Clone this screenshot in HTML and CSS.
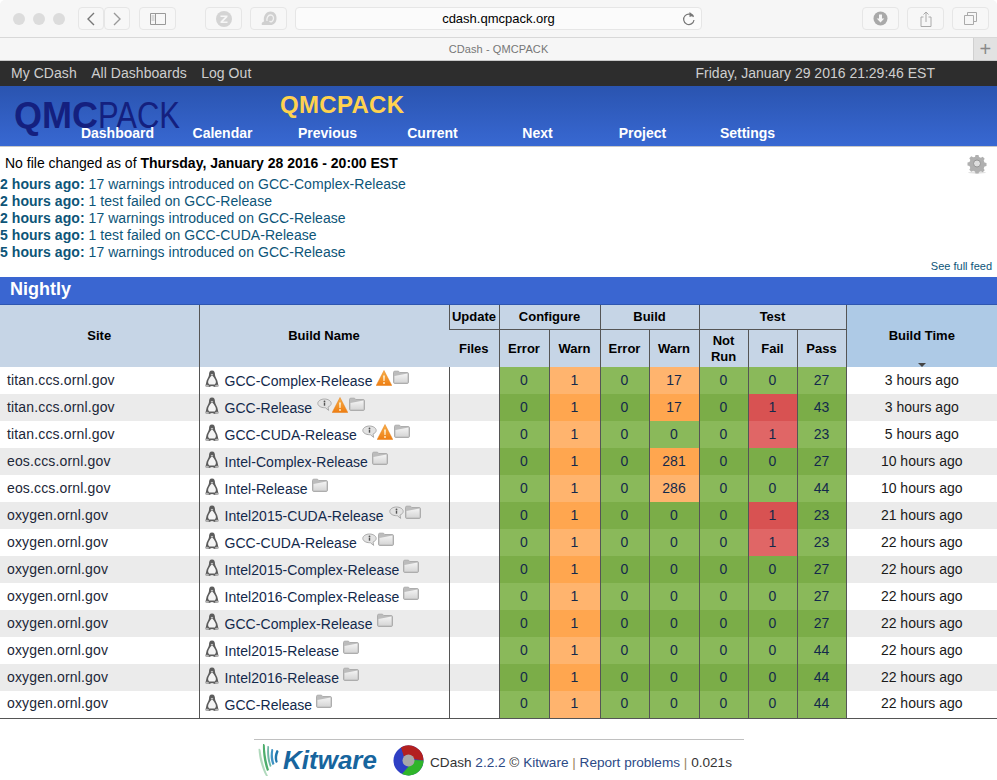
FILE: index.html
```html
<!DOCTYPE html>
<html lang="en">
<head>
  <meta charset="UTF-8">
  <title>CDash - QMCPACK</title>
  <link rel="stylesheet" href="styles.css">
</head>
<body>
  <svg class="defs" width="0" height="0">
    <defs>
      <linearGradient id="warn-fill" x1="0" y1="0" x2="0" y2="1">
        <stop offset="0" stop-color="#f7b04a"/>
        <stop offset="1" stop-color="#ee7d12"/>
      </linearGradient>
      <linearGradient id="folder-fill" x1="0" y1="0" x2="0" y2="1">
        <stop offset="0" stop-color="#f4f4f4"/>
        <stop offset="1" stop-color="#d6d6d6"/>
      </linearGradient>
    </defs>
    <symbol id="tux" viewBox="0 0 14 18">
      <path d="M7 .5C4.600.5 4 2.600 4 5c0 2-2.600 4.600-2.900 8-.1 1.200-.6 2-.6 2.500 0 1 3 1.500 3.500 1.500 1 0 1.800-1 3-1s2 1 3 1c.5 0 3.500-.5 3.500-1.500 0-.5-.5-1.300-.6-2.500C12.600 9.600 10 7 10 5c0-2.400-.6-4.500-3-4.500z" fill="#5c5c5c"/>
      <path d="M7 5.500C5.600 6 4.800 8 3.600 10c-.8 1.500-.6 3.500.6 4.500h5.600c1.200-1 1.400-3 .6-4.500C9.200 8 8.400 6 7 5.500z" fill="#f4f4f4"/>
      <path d="M5.600 4.600L7 3.800l1.400.8L7 5.700z" fill="#c9c9c9"/>
      <path d="M0 16c1-1.600 3-1.600 4-.6l-.4 1.500C2.500 17 .8 16.800 0 16zm14 0c-1-1.600-3-1.600-4-.6l.4 1.500c1.100.1 2.800-.1 3.600-.9z" fill="#b5b5b5"/>
    </symbol>
    <symbol id="folder" viewBox="0 0 16 14">
      <path d="M.5 2.500C.5 1.700 1 1.200 1.800 1.200h3.700l1.200 1.300h7.500c.7 0 1.300.5 1.300 1.200v8.500c0 .7-.5 1.300-1.300 1.300H1.800c-.7 0-1.300-.5-1.300-1.300z" fill="#bcbcbc" stroke="#adadad"/>
      <path d="M1.500 6L14.500 3.500v9H1.500z" fill="url(#folder-fill)"/>
    </symbol>
    <symbol id="warn" viewBox="0 0 16 16">
      <path d="M8 .5L15.800 15.500H.2z" fill="url(#warn-fill)" stroke="#e67f16" stroke-width=".5"/>
      <path d="M7 5.500h2l-.4 5.500H7.400z" fill="#ffe9c4"/>
      <circle cx="8" cy="13" r="1" fill="#ffe9c4"/>
    </symbol>
    <symbol id="note" viewBox="0 0 15 13">
      <path d="M7.500 1C3.900 1 .8 3 .8 5.400c0 2.400 3.100 4.300 6.700 4.300h.8l3.400 2.700-.7-3.300c1.800-.8 3.200-2.100 3.200-3.700C14.200 3 11.100 1 7.500 1z" fill="#e2e2e2" stroke="#ababab"/>
      <circle cx="7.500" cy="3.400" r=".9" fill="#555"/>
      <path d="M6.800 4.700h1.400v3H6.800z" fill="#555"/>
    </symbol>
  </svg>

  <div class="toolbar">
    <div class="lights"><i></i><i></i><i></i></div>
    <div class="nav-pair">
      <div class="tool tool-nav"><svg width="10" height="16" viewBox="0 0 10 16"><path d="M8 2L2 8l6 6" fill="none" stroke="#777" stroke-width="1.400"/></svg></div>
      <div class="tool tool-nav"><svg width="10" height="16" viewBox="0 0 10 16"><path d="M2 2l6 6-6 6" fill="none" stroke="#999" stroke-width="1.400"/></svg></div>
    </div>
    <div class="tool tool-side"><svg width="16" height="12" viewBox="0 0 16 12"><path d="M.5.500h15v11H.500zM5.500.500v11" fill="none" stroke="#999"/><path d="M1.500 3h3M1.500 5h3M1.500 7h3" stroke="#bbb"/></svg></div>
    <div class="tool tool-ext"><svg width="18" height="18" viewBox="0 0 18 18"><circle cx="9" cy="9" r="8" fill="#d4d4d4"/><path d="M5.500 5.500h7v1.500L8 11.500h4.500V13h-7v-1.500L10 7H5.500z" fill="#f6f6f6"/></svg></div>
    <div class="tool tool-ext"><svg width="18" height="18" viewBox="0 0 18 18"><path d="M2 15c-1-1.500 0-3 2-3.500C3 6 6 1.500 10.500 1.500 14.500 1.500 17 5 16.500 9c-.4 3.500-2.500 6-6 6z" fill="#d0d0d0"/><path d="M7 11c-.5-3 1-6 3.500-6s3.500 2.500 2.800 4.500S11 12.500 9.500 11" fill="none" stroke="#f1f1f1" stroke-width="1.300"/></svg></div>
    <div class="urlbar">
      <span class="url">cdash.qmcpack.org</span>
      <svg class="reload" width="14" height="14" viewBox="0 0 14 14"><path d="M11.500 5A5.200 5.200 0 1 0 12 8" fill="none" stroke="#777" stroke-width="1.200"/><path d="M7.500 0v5l4.500-1.500z" fill="#777"/></svg>
    </div>
    <div class="tool tool-right"><svg width="15" height="15" viewBox="0 0 15 15"><circle cx="7.500" cy="7.500" r="7" fill="#a9a9a9"/><path d="M6 3.500h3v4h2.300l-3.800 4-3.800-4H6z" fill="#f6f6f6"/></svg></div>
    <div class="tool tool-right"><svg width="12" height="16" viewBox="0 0 12 16"><path d="M3.500 6H1v9.500h10V6H8.500" fill="none" stroke="#aaa"/><path d="M6 11V1M3.500 3.500L6 1l2.500 2.500" fill="none" stroke="#aaa"/></svg></div>
    <div class="tool tool-right"><svg width="13" height="13" viewBox="0 0 13 13"><path d="M.5 3.500h9v9h-9z" fill="#f6f6f6" stroke="#aaa"/><path d="M3.500 3.500v-3h9v9h-3" fill="none" stroke="#aaa"/></svg></div>
  </div>

  <div class="tabbar">
    <span class="tab-title">CDash - QMCPACK</span>
    <span class="tab-add">+</span>
  </div>

  <div class="topbar">
    <div class="topbar-links">
      <a href="#">My CDash</a>
      <a href="#">All Dashboards</a>
      <a href="#">Log Out</a>
    </div>
    <div class="topbar-date">Friday, January 29 2016 21:29:46 EST</div>
  </div>

  <div class="header">
    <div class="logo"><b>QMC</b><span>PACK</span></div>
    <div class="project-name">QMCPACK</div>
    <nav class="menu">
      <a href="#">Dashboard</a>
      <a href="#">Calendar</a>
      <a href="#">Previous</a>
      <a href="#">Current</a>
      <a href="#">Next</a>
      <a href="#">Project</a>
      <a href="#">Settings</a>
    </nav>
  </div>

  <div class="feed">
    <svg class="gear" width="20" height="20" viewBox="0 0 20 20">
      <ellipse cx="10" cy="18.500" rx="9" ry="1.200" fill="#e2e2e2"/>
      <path d="M8.500 1h3l.5 2 1.900.8 1.800-1 2 2-1 1.800.8 1.900 2 .5v3l-2 .5-.8 1.900 1 1.800-2 2-1.800-1-1.900.8-.5 1.500h-3L8 17.500l-1.900-.8-1.800 1-2-2 1-1.800-.8-1.900-2-.5v-3l2-.5.8-1.900-1-1.800 2-2 1.800 1L8 3z" fill="#b0b0b0"/>
      <circle cx="10" cy="9.500" r="3.500" fill="#dedede" stroke="#969696"/>
    </svg>
    <div class="feed-title">No file changed as of <b>Thursday, January 28 2016 - 20:00 EST</b></div>
    <div class="feed-line"><b>2 hours ago:</b> 17 warnings introduced on GCC-Complex-Release</div>
    <div class="feed-line"><b>2 hours ago:</b> 1 test failed on GCC-Release</div>
    <div class="feed-line"><b>2 hours ago:</b> 17 warnings introduced on GCC-Release</div>
    <div class="feed-line"><b>5 hours ago:</b> 1 test failed on GCC-CUDA-Release</div>
    <div class="feed-line"><b>5 hours ago:</b> 17 warnings introduced on GCC-Release</div>
    <div class="feed-more"><a href="#">See full feed</a></div>
  </div>

  <div class="group-title">Nightly</div>

  <table class="builds">
    <colgroup>
      <col class="c-site"><col class="c-build"><col class="c-50">
      <col class="c-50"><col class="c-51"><col class="c-49"><col class="c-50">
      <col class="c-49"><col class="c-49"><col class="c-49"><col class="c-time">
    </colgroup>
    <thead>
      <tr class="head-top">
        <th rowspan="2">Site</th>
        <th rowspan="2">Build Name</th>
        <th>Update</th>
        <th colspan="2">Configure</th>
        <th colspan="2">Build</th>
        <th colspan="3">Test</th>
        <th rowspan="2" class="sorted">Build Time<span class="sort-arrow"></span></th>
      </tr>
      <tr class="head-sub">
        <th>Files</th>
        <th>Error</th><th>Warn</th>
        <th>Error</th><th>Warn</th>
        <th>Not Run</th><th>Fail</th><th>Pass</th>
      </tr>
    </thead>
    <tbody>
      <tr>
        <td class="site">titan.ccs.ornl.gov</td>
        <td class="name"><svg class="tux"><use href="#tux"/></svg><a href="#">GCC-Complex-Release</a><svg class="ic-warn first"><use href="#warn"/></svg><svg class="ic-folder"><use href="#folder"/></svg></td>
        <td></td><td class="ok">0</td><td class="warn">1</td><td class="ok">0</td><td class="warn">17</td><td class="ok">0</td><td class="ok">0</td><td class="ok">27</td><td class="time">3 hours ago</td>
      </tr>
      <tr>
        <td class="site">titan.ccs.ornl.gov</td>
        <td class="name"><svg class="tux"><use href="#tux"/></svg><a href="#">GCC-Release</a><svg class="ic-note"><use href="#note"/></svg><svg class="ic-warn"><use href="#warn"/></svg><svg class="ic-folder"><use href="#folder"/></svg></td>
        <td></td><td class="ok">0</td><td class="warn">1</td><td class="ok">0</td><td class="warn">17</td><td class="ok">0</td><td class="bad">1</td><td class="ok">43</td><td class="time">3 hours ago</td>
      </tr>
      <tr>
        <td class="site">titan.ccs.ornl.gov</td>
        <td class="name"><svg class="tux"><use href="#tux"/></svg><a href="#">GCC-CUDA-Release</a><svg class="ic-note"><use href="#note"/></svg><svg class="ic-warn"><use href="#warn"/></svg><svg class="ic-folder"><use href="#folder"/></svg></td>
        <td></td><td class="ok">0</td><td class="warn">1</td><td class="ok">0</td><td class="ok">0</td><td class="ok">0</td><td class="bad">1</td><td class="ok">23</td><td class="time">5 hours ago</td>
      </tr>
      <tr>
        <td class="site">eos.ccs.ornl.gov</td>
        <td class="name"><svg class="tux"><use href="#tux"/></svg><a href="#">Intel-Complex-Release</a><svg class="ic-folder first"><use href="#folder"/></svg></td>
        <td></td><td class="ok">0</td><td class="warn">1</td><td class="ok">0</td><td class="warn">281</td><td class="ok">0</td><td class="ok">0</td><td class="ok">27</td><td class="time">10 hours ago</td>
      </tr>
      <tr>
        <td class="site">eos.ccs.ornl.gov</td>
        <td class="name"><svg class="tux"><use href="#tux"/></svg><a href="#">Intel-Release</a><svg class="ic-folder first"><use href="#folder"/></svg></td>
        <td></td><td class="ok">0</td><td class="warn">1</td><td class="ok">0</td><td class="warn">286</td><td class="ok">0</td><td class="ok">0</td><td class="ok">44</td><td class="time">10 hours ago</td>
      </tr>
      <tr>
        <td class="site">oxygen.ornl.gov</td>
        <td class="name"><svg class="tux"><use href="#tux"/></svg><a href="#">Intel2015-CUDA-Release</a><svg class="ic-note"><use href="#note"/></svg><svg class="ic-folder"><use href="#folder"/></svg></td>
        <td></td><td class="ok">0</td><td class="warn">1</td><td class="ok">0</td><td class="ok">0</td><td class="ok">0</td><td class="bad">1</td><td class="ok">23</td><td class="time">21 hours ago</td>
      </tr>
      <tr>
        <td class="site">oxygen.ornl.gov</td>
        <td class="name"><svg class="tux"><use href="#tux"/></svg><a href="#">GCC-CUDA-Release</a><svg class="ic-note"><use href="#note"/></svg><svg class="ic-folder"><use href="#folder"/></svg></td>
        <td></td><td class="ok">0</td><td class="warn">1</td><td class="ok">0</td><td class="ok">0</td><td class="ok">0</td><td class="bad">1</td><td class="ok">23</td><td class="time">22 hours ago</td>
      </tr>
      <tr>
        <td class="site">oxygen.ornl.gov</td>
        <td class="name"><svg class="tux"><use href="#tux"/></svg><a href="#">Intel2015-Complex-Release</a><svg class="ic-folder first"><use href="#folder"/></svg></td>
        <td></td><td class="ok">0</td><td class="warn">1</td><td class="ok">0</td><td class="ok">0</td><td class="ok">0</td><td class="ok">0</td><td class="ok">27</td><td class="time">22 hours ago</td>
      </tr>
      <tr>
        <td class="site">oxygen.ornl.gov</td>
        <td class="name"><svg class="tux"><use href="#tux"/></svg><a href="#">Intel2016-Complex-Release</a><svg class="ic-folder first"><use href="#folder"/></svg></td>
        <td></td><td class="ok">0</td><td class="warn">1</td><td class="ok">0</td><td class="ok">0</td><td class="ok">0</td><td class="ok">0</td><td class="ok">27</td><td class="time">22 hours ago</td>
      </tr>
      <tr>
        <td class="site">oxygen.ornl.gov</td>
        <td class="name"><svg class="tux"><use href="#tux"/></svg><a href="#">GCC-Complex-Release</a><svg class="ic-folder first"><use href="#folder"/></svg></td>
        <td></td><td class="ok">0</td><td class="warn">1</td><td class="ok">0</td><td class="ok">0</td><td class="ok">0</td><td class="ok">0</td><td class="ok">27</td><td class="time">22 hours ago</td>
      </tr>
      <tr>
        <td class="site">oxygen.ornl.gov</td>
        <td class="name"><svg class="tux"><use href="#tux"/></svg><a href="#">Intel2015-Release</a><svg class="ic-folder first"><use href="#folder"/></svg></td>
        <td></td><td class="ok">0</td><td class="warn">1</td><td class="ok">0</td><td class="ok">0</td><td class="ok">0</td><td class="ok">0</td><td class="ok">44</td><td class="time">22 hours ago</td>
      </tr>
      <tr>
        <td class="site">oxygen.ornl.gov</td>
        <td class="name"><svg class="tux"><use href="#tux"/></svg><a href="#">Intel2016-Release</a><svg class="ic-folder first"><use href="#folder"/></svg></td>
        <td></td><td class="ok">0</td><td class="warn">1</td><td class="ok">0</td><td class="ok">0</td><td class="ok">0</td><td class="ok">0</td><td class="ok">44</td><td class="time">22 hours ago</td>
      </tr>
      <tr>
        <td class="site">oxygen.ornl.gov</td>
        <td class="name"><svg class="tux"><use href="#tux"/></svg><a href="#">GCC-Release</a><svg class="ic-folder first"><use href="#folder"/></svg></td>
        <td></td><td class="ok">0</td><td class="warn">1</td><td class="ok">0</td><td class="ok">0</td><td class="ok">0</td><td class="ok">0</td><td class="ok">44</td><td class="time">22 hours ago</td>
      </tr>
    </tbody>
  </table>

  <div class="footer">
    <div class="kitware">
      <svg width="22" height="34" viewBox="0 0 22 34">
        <path d="M8 33C4 26 1 16 .5 6c1-.5 1.700 0 2 1C3.500 16 6 25 10 33z" fill="#8ec9a0" opacity=".7"/>
        <path d="M9 28C6 20 4.500 10 5 1c1-.3 1.600.3 1.800 1.300C7 10 8.500 19 11 27z" fill="#4eae6c"/>
        <path d="M12 24C9.500 18 8.500 11 9.500 3c1-.2 1.500.3 1.600 1.300C10.700 11 11.500 17 13.500 23z" fill="#6fb7a5"/>
        <path d="M14.500 22c-2-5-2.500-10-1-16 1.300 0 1.800.6 1.700 1.500-.8 5 0 9 1.300 13.500z" fill="#3f93c4"/>
        <path d="M18 20c-1.800-4-1.800-8 .7-13 1.300.2 2 .9 1.800 1.800-1.600 3.700-1.700 7-.8 10.200z" fill="#1f76ad"/>
      </svg>
      <span>Kitware</span>
    </div>
    <svg class="cdash-logo" width="31" height="31" viewBox="0 0 31 31">
      <circle cx="15.500" cy="15.500" r="15" fill="#2e3fc4"/>
      <path d="M8 2.500A15 15 0 0 1 30.500 15.500L20.500 14A5.500 5.500 0 0 0 11 12z" fill="#b3201f"/>
      <path d="M30.500 15.500A15 15 0 0 1 9 29l7-8a5.500 5.500 0 0 0 5-6z" fill="#2fb52a"/>
      <circle cx="15.500" cy="15.500" r="6" fill="#a8a8a8"/>
    </svg>
    <div class="footer-text">CDash <a href="#">2.2.2</a> &copy; <a href="#">Kitware</a> <i>|</i> <a href="#">Report problems</a> <i>|</i> 0.021s</div>
  </div>
</body>
</html>
```

FILE: styles.css
```css
body {
  font-family: 'Liberation Sans', Arial, sans-serif;
  font-size: 14px;
  background-color: #fff;
  color: #000;
  margin: 0;
  padding: 0;
}
a {
  color: inherit;
  text-decoration: none;
}
.defs {
  position: absolute;
}

/* browser window */
.toolbar {
  display: flex;
  align-items: center;
  height: 37px;
  padding: 0 8px 0 13px;
  background-color: #f6f6f6;
  border-bottom: 1px solid #d8d8d8;
  border-radius: 5px 5px 0 0;
}
.lights {
  display: flex;
  gap: 8px;
  width: 65px;
}
.lights i {
  width: 12px;
  height: 12px;
  border-radius: 50%;
  background-color: #dcdcdc;
}
.nav-pair {
  display: flex;
}
.tool {
  display: flex;
  align-items: center;
  justify-content: center;
  height: 21px;
  background-color: #f7f7f7;
  border: 1px solid #e6e6e6;
  border-radius: 4px;
}
.tool-nav {
  width: 24px;
}
.tool-side {
  width: 35px;
  margin-left: 9px;
}
.tool-ext {
  width: 35px;
  margin-left: 8px;
}
.tool-side + .tool-ext {
  margin-left: 29px;
}
.urlbar {
  position: relative;
  display: flex;
  align-items: center;
  justify-content: center;
  width: 405px;
  height: 21px;
  margin-left: 8px;
  background-color: #fbfbfb;
  border: 1px solid #e6e6e6;
  border-radius: 4px;
  font-size: 13px;
}
.reload {
  position: absolute;
  right: 5px;
  top: 4px;
}
.tool-right {
  width: 35px;
  margin-left: 8px;
}
.urlbar + .tool-right {
  margin-left: 160px;
}
.tabbar {
  position: relative;
  height: 22px;
  line-height: 22px;
  background-color: #f6f6f6;
  border-bottom: 1px solid #c9c9c9;
  text-align: center;
  font-size: 11px;
  letter-spacing: 0.1px;
  color: #777;
}
.tab-add {
  position: absolute;
  right: 0;
  top: 0;
  width: 23px;
  height: 22px;
  background-color: #e2e2e2;
  border-left: 1px solid #d0d0d0;
  font-size: 20px;
  color: #888;
}

/* cdash header */
.topbar {
  display: flex;
  justify-content: space-between;
  align-items: center;
  height: 23px;
  padding: 0 62px 2px 11px;
  background-color: #2d2d2d;
  color: #cfcfcf;
}
.topbar-links a {
  margin-right: 10.5px;
  letter-spacing: 0.05px;
}
.header {
  position: relative;
  height: 60px;
  background: linear-gradient(#2a54b0, #3868d2);
  border-bottom: 1px solid #c8c8c8;
}
.logo {
  position: absolute;
  left: 14px;
  top: 9px;
  font-size: 36px;
  line-height: 42px;
  color: #14207f;
  white-space: nowrap;
}
.logo span {
  display: inline-block;
  transform: scaleX(0.86);
  transform-origin: left;
}
.project-name {
  padding: 5px 0 0 280px;
  height: 28px;
  line-height: 28px;
  font-size: 24px;
  letter-spacing: 0.3px;
  font-weight: bold;
  color: #ffd24f;
}
.menu {
  position: relative;
  display: flex;
  padding-left: 65px;
  margin-top: 6px;
}
.menu a {
  width: 105px;
  text-align: center;
  font-weight: bold;
  color: #fff;
}

/* feed */
.feed {
  position: relative;
  height: 130px;
  color: #0d5578;
}
.gear {
  position: absolute;
  right: 10px;
  top: 7px;
}
.feed-title {
  padding: 8px 0 5px 5px;
  line-height: 16px;
  color: #000;
}
.feed-line {
  height: 17px;
  line-height: 17px;
  letter-spacing: 0.05px;
}
.feed-more {
  position: absolute;
  right: 5px;
  bottom: 5px;
  font-size: 11px;
}
.group-title {
  height: 27px;
  line-height: 25px;
  padding-left: 10px;
  background-color: #3a66d1;
  color: #fff;
  font-size: 18px;
  font-weight: bold;
}

/* build table */
.builds {
  width: 997px;
  table-layout: fixed;
  border-collapse: collapse;
  border-bottom: 1px solid #555;
  color: #13294b;
}
.c-site { width: 199px; }
.c-build { width: 250px; }
.c-50 { width: 50px; }
.c-51 { width: 51px; }
.c-49 { width: 49px; }
.c-time { width: 151px; }
.builds th {
  position: relative;
  padding: 0;
  background-color: #c6d5e6;
  border-left: 1px solid #555;
  color: #000;
  font-size: 13px;
  line-height: 16px;
}
.builds th:first-child {
  border-left: 0;
}
.builds .head-top th {
  height: 24px;
  border-top: 1px solid #2e56b0;
}
.builds .head-sub th {
  height: 37px;
  border-top: 1px solid #555;
}
.builds th.sorted {
  background-color: #aecae6;
}
.sort-arrow {
  position: absolute;
  left: 71px;
  bottom: 0;
  border: 4px solid transparent;
  border-top-color: #444;
  border-bottom: 0;
}
.builds td {
  box-sizing: border-box;
  height: 27px;
  padding: 0 0 2px;
  border-left: 1px solid #555;
  text-align: center;
}
.builds tbody tr:nth-child(even) {
  background-color: #ebebeb;
}
.builds td.site {
  border-left: 0;
  padding-left: 7px;
  text-align: left;
  letter-spacing: 0.15px;
  color: #1c2738;
}
.builds td.name {
  padding-left: 5px;
  text-align: left;
  letter-spacing: 0.05px;
  white-space: nowrap;
}
.builds td.name a {
  margin-left: 6px;
}
.builds td.time {
  color: #1a1a1a;
}
td.ok { background-color: #8ab95a; }
td.warn { background-color: #ffb46e; }
td.bad { background-color: #e06666; }
tr:nth-child(even) td.ok { background-color: #7bad48; }
tr:nth-child(even) td.warn { background-color: #ffa64f; }
tr:nth-child(even) td.bad { background-color: #d85252; }
.tux {
  width: 14px;
  height: 18px;
  vertical-align: -2px;
}
.ic-warn {
  width: 16px;
  height: 16px;
  vertical-align: 0;
}
.ic-warn.first {
  margin-left: 3px;
}
.ic-folder {
  width: 16px;
  height: 14px;
  margin-left: 1px;
  vertical-align: 2px;
}
.ic-folder.first {
  margin-left: 4px;
}
.ic-note {
  width: 15px;
  height: 13px;
  margin-left: 5px;
  vertical-align: 2px;
}

/* footer */
.footer {
  display: flex;
  align-items: center;
  width: 490px;
  height: 41px;
  margin: 20px 0 0 254px;
  border-top: 1px solid #c0c0c0;
  font-size: 13.6px;
  color: #333;
}
.kitware {
  display: flex;
  align-items: center;
  width: 139px;
  padding-left: 4px;
  box-sizing: border-box;
}
.kitware span {
  margin-left: 3px;
  font-size: 26px;
  line-height: 30px;
  font-weight: bold;
  font-style: italic;
  color: #17659e;
}
.cdash-logo {
  flex: none;
}
.footer-text {
  margin: 4px 0 0 6px;
  white-space: nowrap;
}
.footer-text a {
  color: #2c4a86;
}
.footer-text i {
  font-style: normal;
  color: #9a8560;
}
```
